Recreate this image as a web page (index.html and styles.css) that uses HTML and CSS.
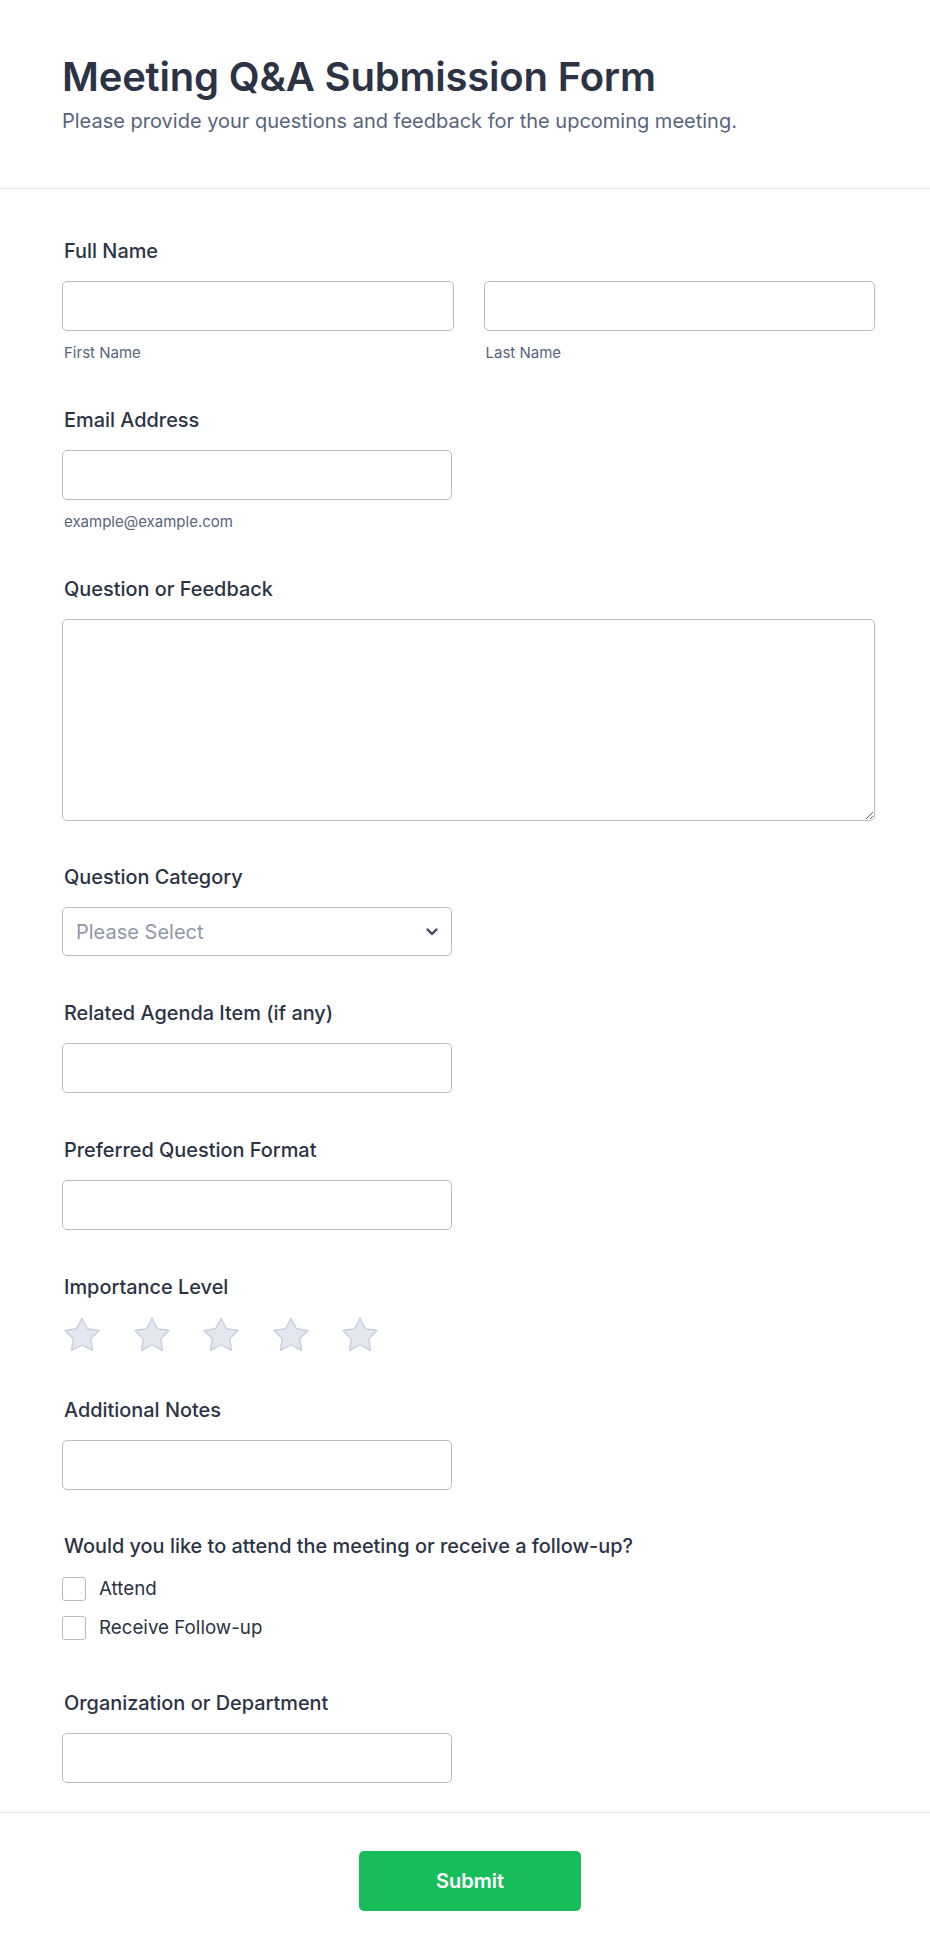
FILE: index.html
```html
<!DOCTYPE html>
<html lang="en">
<head>
<meta charset="utf-8">
<title>Meeting Q&amp;A Submission Form</title>
<link rel="stylesheet" href="styles.css">
</head>
<body>
<form class="form">
  <header class="form-header">
    <h1 class="form-title">Meeting Q&amp;A Submission Form</h1>
    <p class="form-subtitle">Please provide your questions and feedback for the upcoming meeting.</p>
  </header>

  <div class="form-body">
    <div class="field">
      <label class="field-label">Full Name</label>
      <div class="name-row">
        <div class="name-col">
          <input class="text-input" type="text">
          <span class="sublabel">First Name</span>
        </div>
        <div class="name-col">
          <input class="text-input" type="text">
          <span class="sublabel">Last Name</span>
        </div>
      </div>
    </div>

    <div class="field">
      <label class="field-label">Email Address</label>
      <div class="half">
        <input class="text-input" type="email">
        <span class="sublabel">example@example.com</span>
      </div>
    </div>

    <div class="field">
      <label class="field-label">Question or Feedback</label>
      <textarea class="textarea"></textarea>
    </div>

    <div class="field">
      <label class="field-label">Question Category</label>
      <div class="half select-wrap">
        <select class="select">
          <option>Please Select</option>
        </select>
        <svg class="chevron" width="12" height="8" viewBox="0 0 12 8"><path d="M1.5 1.5 L6 6 L10.5 1.5" fill="none" stroke="#3e4759" stroke-width="2.4" stroke-linecap="round" stroke-linejoin="round"/></svg>
      </div>
    </div>

    <div class="field">
      <label class="field-label">Related Agenda Item (if any)</label>
      <div class="half"><input class="text-input" type="text"></div>
    </div>

    <div class="field">
      <label class="field-label">Preferred Question Format</label>
      <div class="half"><input class="text-input" type="text"></div>
    </div>

    <div class="field">
      <label class="field-label">Importance Level</label>
      <div class="stars">
        <svg class="star" width="40" height="36" viewBox="0 0 40 36"><polygon points="20,1.2 25.4,11.7 37.1,13.5 28.7,21.8 30.6,33.4 20,28 9.4,33.4 11.3,21.8 2.9,13.5 14.6,11.7" fill="#e3e7ef" stroke="#c9cfdb" stroke-width="1.4" stroke-linejoin="round"/></svg>
        <svg class="star" width="40" height="36" viewBox="0 0 40 36"><polygon points="20,1.2 25.4,11.7 37.1,13.5 28.7,21.8 30.6,33.4 20,28 9.4,33.4 11.3,21.8 2.9,13.5 14.6,11.7" fill="#e3e7ef" stroke="#c9cfdb" stroke-width="1.4" stroke-linejoin="round"/></svg>
        <svg class="star" width="40" height="36" viewBox="0 0 40 36"><polygon points="20,1.2 25.4,11.7 37.1,13.5 28.7,21.8 30.6,33.4 20,28 9.4,33.4 11.3,21.8 2.9,13.5 14.6,11.7" fill="#e3e7ef" stroke="#c9cfdb" stroke-width="1.4" stroke-linejoin="round"/></svg>
        <svg class="star" width="40" height="36" viewBox="0 0 40 36"><polygon points="20,1.2 25.4,11.7 37.1,13.5 28.7,21.8 30.6,33.4 20,28 9.4,33.4 11.3,21.8 2.9,13.5 14.6,11.7" fill="#e3e7ef" stroke="#c9cfdb" stroke-width="1.4" stroke-linejoin="round"/></svg>
        <svg class="star" width="40" height="36" viewBox="0 0 40 36"><polygon points="20,1.2 25.4,11.7 37.1,13.5 28.7,21.8 30.6,33.4 20,28 9.4,33.4 11.3,21.8 2.9,13.5 14.6,11.7" fill="#e3e7ef" stroke="#c9cfdb" stroke-width="1.4" stroke-linejoin="round"/></svg>
      </div>
    </div>

    <div class="field">
      <label class="field-label">Additional Notes</label>
      <div class="half"><input class="text-input" type="text"></div>
    </div>

    <div class="field">
      <label class="field-label">Would you like to attend the meeting or receive a follow-up?</label>
      <div class="options">
        <label class="option"><span class="checkbox"></span><span class="option-text">Attend</span></label>
        <label class="option"><span class="checkbox"></span><span class="option-text">Receive Follow-up</span></label>
      </div>
    </div>

    <div class="field">
      <label class="field-label">Organization or Department</label>
      <div class="half"><input class="text-input" type="text"></div>
    </div>
  </div>

  <footer class="form-footer">
    <button class="submit" type="button">Submit</button>
  </footer>
</form>
</body>
</html>
```
FILE: styles.css
```css
* {
  box-sizing: border-box;
}

html, body {
  margin: 0;
  padding: 0;
  background: #ffffff;
}

body {
  font-family: "Inter", "Noto Sans", sans-serif;
  color: #2c3345;
}

.form {
  width: 930px;
}

.form-header {
  padding: 53px 55px 55px 62px;
  border-bottom: 1px solid #dfe2e8;
}

.form-title {
  margin: 0;
  font-size: 40px;
  line-height: 48px;
  font-weight: 600;
  letter-spacing: -0.2px;
  color: #2c3345;
}

.form-subtitle {
  margin: 8px 0 0;
  font-size: 20px;
  line-height: 24px;
  font-weight: 400;
  color: #57647e;
}

.form-body {
  padding: 50px 55px 29px 62px;
  display: flex;
  flex-direction: column;
  gap: 44.8px;
}

.field {
  display: flex;
  flex-direction: column;
}

.field-label {
  display: block;
  font-size: 19.9px;
  line-height: 24px;
  font-weight: 500;
  color: #2c3345;
  padding-left: 2px;
  margin-bottom: 18px;
}

.name-row {
  display: flex;
  gap: 30px;
}

.name-col {
  flex: 1;
  display: flex;
  flex-direction: column;
}

.half {
  width: 390px;
  display: flex;
  flex-direction: column;
}

.text-input {
  display: block;
  width: 100%;
  height: 50px;
  margin: 0;
  border: 1px solid #b8bdc9;
  border-radius: 5px;
  background: #fff;
  font-family: inherit;
  font-size: 20px;
  padding: 0 13px;
  outline: none;
}

.sublabel {
  margin-top: 12px;
  padding-left: 2px;
  font-size: 15px;
  line-height: 20px;
  color: #57647e;
}

.textarea {
  display: block;
  width: 100%;
  height: 202px;
  margin: 0;
  border: 1px solid #b8bdc9;
  border-radius: 5px;
  background: #fff;
  font-family: inherit;
  font-size: 20px;
  padding: 12px 13px;
  outline: none;
  resize: vertical;
}

.select-wrap {
  position: relative;
}

.select {
  display: block;
  width: 100%;
  height: 49px;
  margin: 0;
  border: 1px solid #b8bdc9;
  border-radius: 5px;
  background: #fff;
  font-family: inherit;
  font-size: 20px;
  color: #8f97a8;
  padding: 0 40px 0 13px;
  appearance: none;
  -webkit-appearance: none;
  outline: none;
}

.chevron {
  position: absolute;
  right: 14px;
  top: 21px;
}

.stars {
  display: flex;
  gap: 29.5px;
  height: 36px;
}

.star {
  display: block;
}

.options {
  display: flex;
  flex-direction: column;
  gap: 15px;
  padding-top: 1px;
  padding-bottom: 6px;
}

.option {
  display: flex;
  align-items: center;
  gap: 13px;
  height: 24px;
}

.checkbox {
  width: 24px;
  height: 24px;
  border: 1px solid #b8bdc9;
  border-radius: 3px;
  background: #fff;
  flex: none;
}

.option-text {
  font-size: 18.75px;
  line-height: 24px;
  color: #2c3345;
}

.form-footer {
  border-top: 1px solid #dfe2e8;
  padding: 38px 0 49px;
  display: flex;
  justify-content: center;
}

.submit {
  width: 222px;
  height: 60px;
  border: none;
  border-radius: 5px;
  background: #18bd5b;
  color: #ffffff;
  font-family: inherit;
  font-size: 20px;
  font-weight: 600;
  margin-left: 10px;
}
```
